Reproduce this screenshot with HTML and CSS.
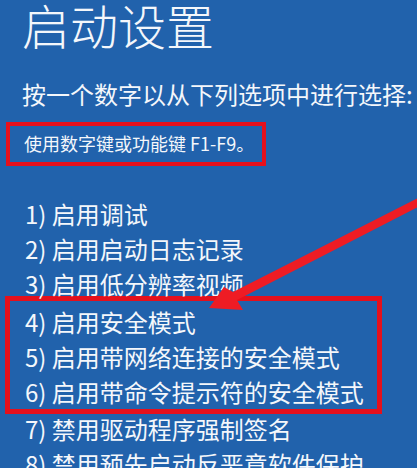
FILE: index.html
```html
<!DOCTYPE html>
<html lang="zh-CN">
<head>
<meta charset="utf-8">
<title>启动设置</title>
<link rel="stylesheet" href="styles.css">
</head>
<body>
<div class="screen">
  <h1 class="title">启动设置</h1>
  <p class="subtitle">按一个数字以从下列选项中进行选择:</p>
  <div class="hint-box">使用数字键或功能键 F1-F9。</div>
  <ul class="options">
    <li class="option">1) 启用调试</li>
    <li class="option">2) 启用启动日志记录</li>
    <li class="option">3) 启用低分辨率视频</li>
  </ul>
  <ul class="options highlight-box">
    <li class="option">4) 启用安全模式</li>
    <li class="option">5) 启用带网络连接的安全模式</li>
    <li class="option">6) 启用带命令提示符的安全模式</li>
  </ul>
  <ul class="options after-box">
    <li class="option">7) 禁用驱动程序强制签名</li>
    <li class="option">8) 禁用预先启动反恶意软件保护</li>
  </ul>
  <svg class="arrow" width="417" height="468" viewBox="0 0 417 468">
    <polygon points="420,197 233,292 224,287 209,308 243,310 237,300 420,206" fill="#ee1c24"/>
  </svg>
</div>
</body>
</html>
```
FILE: styles.css
```css
html, body {
  margin: 0;
  padding: 0;
}
body {
  background: #2162ac;
  font-family: "Noto Sans CJK SC", "Noto Sans", sans-serif;
  color: #f4f7fb;
  overflow: hidden;
}
.screen {
  position: relative;
  width: 417px;
  height: 468px;
  overflow: hidden;
  padding-left: 22px;
  box-sizing: border-box;
}
.title {
  margin: 0;
  font-size: 48px;
  line-height: 48px;
  font-weight: 300;
}
.subtitle {
  margin: 31px 0 0 0;
  font-size: 24px;
  line-height: 30px;
  white-space: nowrap;
}
.hint-box {
  margin: 13px 0 0 -16px;
  width: 260px;
  box-sizing: border-box;
  border: 4px solid #e5101c;
  padding: 0 0 1px 14px;
  font-size: 18px;
  line-height: 35px;
  white-space: nowrap;
}
.options {
  list-style: none;
  margin: 30px 0 0 0;
  padding: 0 0 0 3px;
}
.option {
  font-size: 24px;
  line-height: 35px;
  white-space: nowrap;
}
.highlight-box {
  margin: -5px 0 -3px -17px;
  width: 377px;
  box-sizing: border-box;
  border: 5px solid #e5101c;
  padding: 3px 0 0 15px;
}
.after-box {
  margin-top: 0;
}
.arrow {
  position: absolute;
  left: 0;
  top: 0;
  pointer-events: none;
}
```
